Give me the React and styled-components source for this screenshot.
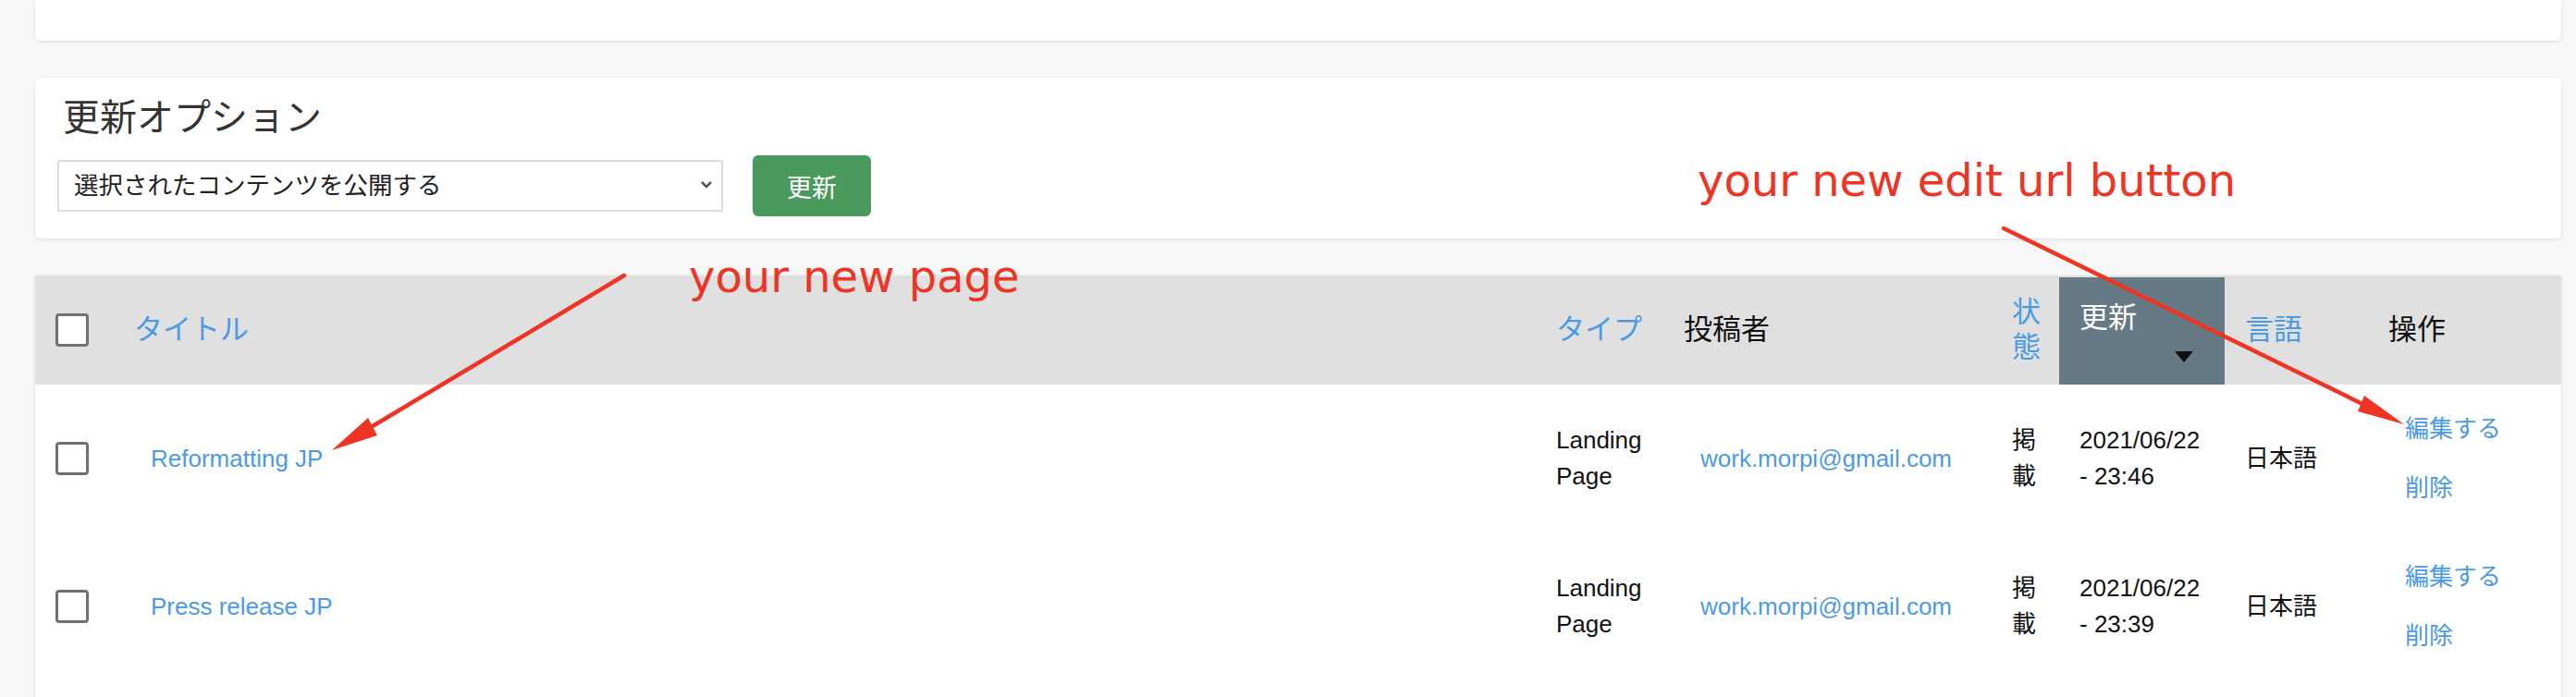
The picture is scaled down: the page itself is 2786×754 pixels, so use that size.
import React from 'react';
import styled, { createGlobalStyle } from 'styled-components';

const GlobalStyle = createGlobalStyle`
  html, body {
    margin: 0;
    padding: 0;
    background: #f8f8f8;
  }
  body {
    font-family: "Liberation Sans", "Noto Sans CJK JP", sans-serif;
    color: #111;
  }
`;

const LINK = '#4b9ae6';
const RED = '#ee3424';

const Page = styled.div`
  position: relative;
  width: 2786px;
  height: 754px;
  overflow: hidden;
  box-sizing: border-box;
  padding: 0 16px 0 38px;
  display: flex;
  flex-direction: column;
  gap: 40px;
`;

const Card = styled.div`
  background: #fff;
  border-radius: 6px;
  box-shadow: 0 1px 4px rgba(0, 0, 0, 0.12);
`;

const TopCard = styled(Card)`
  height: 44px;
  flex-shrink: 0;
  border-radius: 0 0 6px 6px;
`;

const OptionsCard = styled(Card)`
  flex-shrink: 0;
  padding: 18px 24px 24px;
  display: flex;
  flex-direction: column;
  gap: 16px;
`;

const OptionsTitle = styled.h2`
  margin: 0 0 0 6px;
  font-size: 40px;
  line-height: 50px;
  font-weight: normal;
  color: #333;
`;

const OptionsRow = styled.div`
  display: flex;
  align-items: center;
  gap: 32px;
`;

const SelectWrap = styled.div`
  position: relative;
  width: 720px;
  height: 56px;
`;

const Select = styled.select`
  appearance: none;
  width: 100%;
  height: 100%;
  box-sizing: border-box;
  border: 2px solid #dddddd;
  border-radius: 0;
  background: #fff;
  padding: 0 40px 0 16px;
  font-family: inherit;
  font-size: 26.5px;
  color: #222;
`;

const Chevron = styled.svg`
  position: absolute;
  right: 10px;
  top: 21px;
  pointer-events: none;
`;

const UpdateButton = styled.button`
  width: 128px;
  height: 66px;
  border: none;
  border-radius: 6px;
  background: #4a9a5e;
  color: #fff;
  font-family: inherit;
  font-size: 27px;
`;

const Table = styled(Card)`
  border-radius: 0;
  padding-bottom: 40px;
`;

const cols = '85px 1fr 138px 355px 73px 179px 155px 209px';

const HeadRow = styled.div`
  display: grid;
  grid-template-columns: ${cols};
  height: 118px;
  background: #e0e0e0;
  font-size: 31px;
  line-height: 38px;
`;

const HeadCell = styled.div`
  display: flex;
  align-items: center;
  padding: 0 22px;
  color: ${(p) => (p.$link ? LINK : '#111')};
`;

const SortCell = styled.div`
  margin-top: 2px;
  background: #667a86;
  color: #fff;
  padding: 0 22px;
  display: flex;
  flex-direction: column;
  justify-content: center;
  gap: 16px;
  line-height: 40px;
`;

const SortArrow = styled.span`
  align-self: flex-end;
  margin-right: 12px;
  width: 0;
  height: 0;
  border-left: 10px solid transparent;
  border-right: 10px solid transparent;
  border-top: 12px solid #111;
`;

const Row = styled.div`
  display: grid;
  grid-template-columns: ${cols};
  height: 160px;
  align-items: center;
  font-size: 26px;
  line-height: 39px;
`;

const Cell = styled.div`
  padding: 0 22px;
`;

const DateLine = styled.div`
  white-space: nowrap;
`;

const Checkbox = styled.span`
  display: block;
  width: 36px;
  height: 36px;
  box-sizing: border-box;
  border: 3px solid #707070;
  border-radius: 4px;
  background: #fff;
`;

const RowLink = styled.a`
  display: ${(p) => (p.$block ? 'block' : 'inline-block')};
  padding: ${(p) => (p.$block ? '12px 18px' : '0 18px')};
  line-height: 40px;
  color: ${LINK};
  text-decoration: none;
  white-space: nowrap;
`;

const Overlay = styled.svg`
  position: absolute;
  left: 0;
  top: 0;
  pointer-events: none;
`;

const Note = styled.div`
  position: absolute;
  left: ${(p) => p.$left}px;
  top: ${(p) => p.$top}px;
  font-family: "DejaVu Sans", sans-serif;
  font-size: 48px;
  line-height: 1;
  color: ${RED};
  white-space: nowrap;
`;

const rows = [
  { title: 'Reformatting JP', time: '23:46' },
  { title: 'Press release JP', time: '23:39' },
];

export default function App() {
  return (
    <>
      <GlobalStyle />
      <Page>
        <TopCard />

        <OptionsCard>
          <OptionsTitle>更新オプション</OptionsTitle>
          <OptionsRow>
            <SelectWrap>
              <Select defaultValue="publish">
                <option value="publish">選択されたコンテンツを公開する</option>
              </Select>
              <Chevron width="16" height="12" viewBox="0 0 16 12">
                <path d="M3 3 L8 8 L13 3" fill="none" stroke="#555" strokeWidth="2.6" />
              </Chevron>
            </SelectWrap>
            <UpdateButton>更新</UpdateButton>
          </OptionsRow>
        </OptionsCard>

        <Table>
          <HeadRow>
            <HeadCell><Checkbox /></HeadCell>
            <HeadCell $link>タイトル</HeadCell>
            <HeadCell $link>タイプ</HeadCell>
            <HeadCell>投稿者</HeadCell>
            <HeadCell $link>状態</HeadCell>
            <SortCell>
              <span>更新</span>
              <SortArrow />
            </SortCell>
            <HeadCell $link>言語</HeadCell>
            <HeadCell>操作</HeadCell>
          </HeadRow>

          {rows.map((r) => (
            <Row key={r.title}>
              <Cell><Checkbox /></Cell>
              <Cell><RowLink href="#">{r.title}</RowLink></Cell>
              <Cell>Landing Page</Cell>
              <Cell><RowLink href="#">work.morpi@gmail.com</RowLink></Cell>
              <Cell>掲載</Cell>
              <Cell>
                <DateLine>2021/06/22</DateLine>
                <DateLine>- {r.time}</DateLine>
              </Cell>
              <Cell>日本語</Cell>
              <Cell>
                <RowLink $block href="#">編集する</RowLink>
                <RowLink $block href="#">削除</RowLink>
              </Cell>
            </Row>
          ))}
        </Table>

        <Overlay width="2786" height="754" viewBox="0 0 2786 754">
          <line x1="675" y1="298" x2="403" y2="461" stroke={RED} strokeWidth="4.5" strokeLinecap="round" />
          <polygon points="359,487 398,452 408,471" fill={RED} />
          <line x1="2167" y1="247" x2="2553" y2="436" stroke={RED} strokeWidth="4.5" strokeLinecap="round" />
          <polygon points="2600,459 2557,428 2550,445" fill={RED} />
        </Overlay>
        <Note $left={745} $top={275}>your new page</Note>
        <Note $left={1836} $top={171}>your new edit url button</Note>
      </Page>
    </>
  );
}
